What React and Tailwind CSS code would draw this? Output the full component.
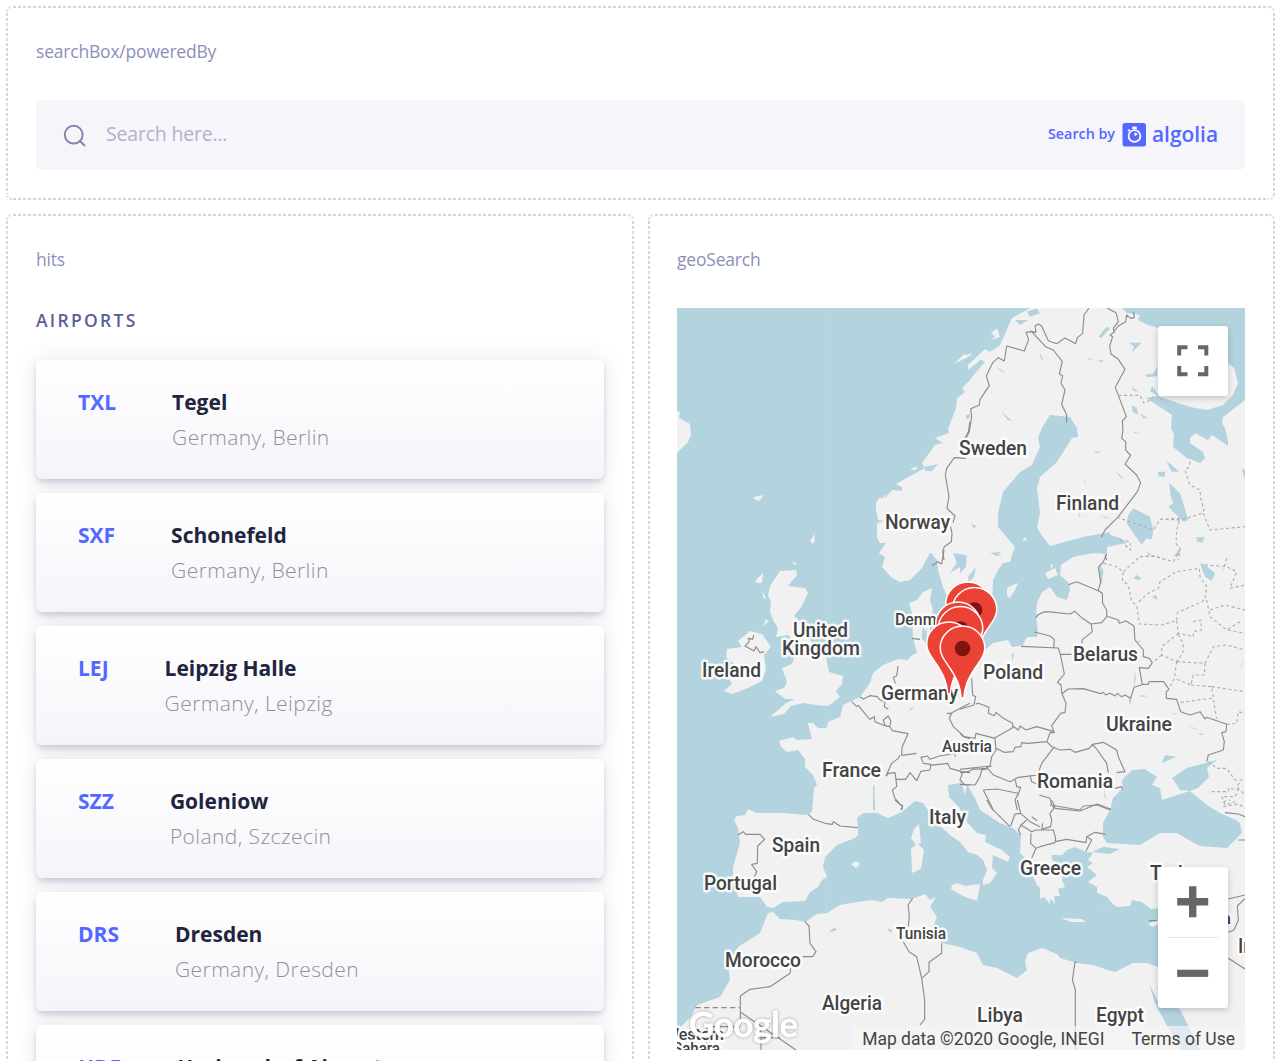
import React from "react";

const hits = [
  ["TXL", "Tegel", "Germany, Berlin"],
  ["SXF", "Schonefeld", "Germany, Berlin"],
  ["LEJ", "Leipzig Halle", "Germany, Leipzig"],
  ["SZZ", "Goleniow", "Poland, Szczecin"],
  ["DRS", "Dresden", "Germany, Dresden"],
  ["HDF", "Heringsdorf Airport", "Germany, Heringsdorf"],
];

// [text, x, baseline, width, font size]
const labels = [
  ["Norway", 885, 528.6, 65, 19.4],
  ["Sweden", 959, 455.4, 68, 19.4],
  ["Finland", 1056, 510.4, 63, 19.4],
  ["United", 793, 637.4, 55, 19.4],
  ["Kingdom", 782, 654.6, 78, 19.4],
  ["Ireland", 702, 676.6, 59, 19.4],
  ["Denmark", 895, 625.4, 64, 17],
  ["Germany", 881, 700, 77, 19.4],
  ["Poland", 983, 679.4, 60, 19.4],
  ["Belarus", 1073, 660.6, 65, 19.4],
  ["Ukraine", 1106, 730.6, 66, 19.4],
  ["Austria", 942, 752.4, 50, 16.5],
  ["France", 822, 776.6, 59, 19.4],
  ["Romania", 1037, 787.6, 76, 19.4],
  ["Italy", 929, 823.6, 37, 19.4],
  ["Spain", 772, 851.6, 48, 19.4],
  ["Portugal", 704, 890.4, 73, 19.4],
  ["Greece", 1020, 874.5, 61, 19.4],
  ["Turkey", 1150, 880, 57, 19.4],
  ["Tunisia", 896, 939.4, 50, 16.5],
  ["Morocco", 725, 967, 76, 19.4],
  ["Algeria", 822, 1010, 60, 19.4],
  ["Libya", 977, 1022.4, 46, 19.4],
  ["Egypt", 1096, 1022.4, 48, 19.4],
  ["Western", 665, 1039.5, 59, 16],
  ["Sahara", 673, 1054, 47, 16],
  ["Iraq", 1238, 953, 32, 19.4],
  ["Syria", 1190, 924, 41, 16.5],
];

const pins = [
  [968, 605],
  [974.5, 610.5],
  [958, 625],
  [960.5, 629.5],
  [949, 645],
  [962.5, 649],
];

const Sector = ({ x, y, children }) => (
  <g transform={`translate(${x} ${y}) scale(0.33333)`}>{children}</g>
);

const Land = () => (
  <g fill="#f1f1f1">
    <path d="M1245 308V400L1245 1050H677V1030L690 1018 697 1005 720 997 730 980 728 963 738 947 760 933 768 913 773 912 780 919 796 920 805 922 817 914 827 913 840 905 857 902 872 900 882 902 888 898 912 899 925 894 930 900 936 897 930 907 937 917 933 927 937 938 942 943 960 947 977 953 983 965 997 968 1017 978 1027 970 1025 962 1028 953 1042 948 1057 954 1060 958 1077 963 1093 965 1108 970 1115 972 1133 963 1147 963 1158 967 1168 955 1175 935 1178 912 1160 908 1151 909 1142 902 1132 900 1130 906 1117 907 1112 903 1107 897 1097 893 1097 887 1088 882 1097 875 1087 867 1093 863 1088 860 1093 853 1087 852 1082 850 1075 847 1067 850 1062 855 1052 855 1052 860 1065 866 1062 880 1065 887 1058 889 1060 896 1054 896 1055 904 1050 898 1050 904 1044 897 1040 899 1040 888 1037 885 1030 870 1025 858 1020 853 1021 836 1013 828 1000 823 980 810 975 798 967 785 965 795 962 783 948 785 949 797 959 807 967 822 977 833 986 835 985 842 1002 850 1010 857 1008 862 993 855 992 868 997 873 990 883 983 885 983 880 987 870 983 860 977 855 968 852 960 842 950 835 937 823 923 803 915 801 902 812 888 818 877 813 863 813 857 818 858 827 858 835 855 838 837 845 825 857 823 867 827 877 822 880 818 887 810 892 805 901 783 902 773 908 767 907 760 897 752 897 738 897 733 877 733 867 740 843 738 828 734 820 737 816 745 815 748 809 757 813 783 813 807 815 812 812 814 788 817 785 813 775 805 767 805 759 798 750 787 752 781 747 779 741 793 737 797 740 812 739 808 723 813 723 818 728 827 728 828 722 840 717 843 705 860 697 870 683 873 673 883 665 898 659 908 660 912 655 917 653 913 638 912 613 909 603 917 600 923 592 932 588 930 600 933 610 929 625 933 640 938 655 960 662 985 650 993 643 1008 640 1012 647 1023 645 1027 637 1037 637 1038 632 1036 617 1037 603 1042 592 1050 587 1057 597 1067 600 1070 590 1069 583 1060 575 1061 565 1073 557 1093 553 1107 554 1107 547 1127 543 1120 538 1110 535 1110 532 1083 537 1050 546 1040 533 1037 527 1040 513 1037 488 1040 477 1057 462 1072 438 1078 437 1077 428 1070 417 1050 415 1042 428 1038 438 1040 447 1032 465 1020 472 1003 492 998 513 998 527 1015 547 1013 552 1010 562 1003 563 998 570 993 580 992 603 986 613 965 620 953 610 943 587 938 570 937 560 930 553 922 568 910 580 900 582 892 578 882 567 885 557 879 553 886 543 880 543 877 538 877 523 884 521 878 520 876 510 876 503 879 498 885 498 892 490 902 491 902 487 896 484 903 480 925 468 922 463 935 445 943 443 935 438 949 433 948 429 956 408 957 398 965 392 962 388 970 380 972 377 985 362 978 358 993 350 1000 345 1012 318 1030 308Z" />
    {/* British Isles */}
    <path d="M780 571L796 570 797 575 788 586 805 588 808 593 802 606 794 616 801 622 816 650 826 658 829 672 843 676 842 684 836 691 840 697 828 706 816 705 803 703 791 706 784 714 770 717 786 703 795 699 785 699 775 691 784 688 787 682 782 668 792 664 795 655 794 641 788 635 776 637 778 628 773 620 770 612 771 602 768 595 770 586Z" />
    <path d="M750 631L762 634 771 647 764 655 766 670 762 681 748 688 732 694 724 691 732 684 726 674 738 667 726 657 727 649 742 647 738 641Z" />
    <path d="M763 573L755 581 757 583 762 583ZM761 590L766 598 764 599ZM793 561L797 564 794 565ZM766 619L763 626 769 621ZM810 541L814 534 815 540 813 544ZM754 499L754 497 764 495 759 501Z" />
    {/* Iceland */}
    <path d="M677 410L680 413 679 418 690 424 691 435 688 442 677 453Z" />
    {/* Lofoten */}
    <path d="M954 364L966 352 976 348 970 356ZM968 365L985 349 990 352 978 362 968 370ZM910 470L917 466 916 470ZM883 497L885 494 885 498ZM980 340L997 328 1000 337 990 340Z" />
    {/* Baltic and Danish islands */}
    <path d="M1007 588L1013 585 1018 583 1015 590 1010 598 1007 596ZM1045 573L1055 568 1058 575 1048 579ZM1050 565L1053 564 1052 569ZM1022 540L1025 537 1027 541ZM934 630L945 628 942 640 935 637Z" />
    {/* Mediterranean islands */}
    <path d="M919 824L921 843 916 845 911 838 914 829ZM911 848L918 844 924 850 921 869 912 873ZM851 864L856 861 860 864 856 868ZM952 885L957 883 965 886 980 884 977 901 965 897 951 889ZM1061 918L1082 919 1086 922 1071 922ZM1148 924L1160 919 1158 924 1153 927ZM1105 906L1104 910 1103 911Z" />
  </g>
);

const Water = () => (
  <g fill="#b3d3df">
    <path d="M1122 308L1127 313 1140 315 1138 320 1148 325 1158 328 1175 340 1212 358 1228 363 1234 368 1238 383 1233 395 1223 405 1207 410 1190 407 1178 403 1160 397 1152 386 1150 391 1158 396 1146 398 1160 407 1172 415 1171 428 1174 435 1173 447 1187 458 1200 463 1205 458 1203 452 1190 443 1190 438 1195 433 1208 440 1212 435 1228 446 1228 441 1225 428 1222 423 1223 417 1245 400V308Z" />
    <path d="M1110 810L1113 798 1123 788 1122 780 1132 770 1145 769 1157 777 1152 785 1160 788 1162 800 1177 795 1190 791 1207 805 1220 813 1236 820 1240 823 1242 833 1227 848 1200 846 1185 838 1177 833 1160 833 1140 845 1107 843 1103 837 1103 823ZM1172 778L1187 768 1217 760 1207 768 1209 777 1198 788 1190 791 1180 790 1177 785Z" />
    <path d="M1092 852L1103 847 1120 849 1110 854ZM1149 984L1158 1001 1180 1009 1200 1050H1182L1166 1024 1155 1003Z" />
    <Sector x={960} y={300}>
      <path d="M0 160L50 120 85 90 105 110 75 130 62 150 20 165ZM70 90L100 70 120 45 160 30 150 60 90 100ZM165 60L205 60 180 75ZM200 35L230 25 240 40 210 50ZM415 110L440 80 450 85 425 113ZM508 128L545 128 515 158 522 140ZM553 225L580 220 592 200V228L565 232ZM108 200L138 218 122 214ZM125 335L155 362 143 360ZM400 455H425L410 460ZM465 510L495 540 480 532ZM372 538L378 555 373 550ZM240 160L252 182 242 175ZM380 175L398 176 390 180ZM412 180L432 182 425 188ZM515 315L530 325 535 345 518 335ZM520 395L545 400 525 400ZM540 340L563 355 550 355ZM594 515H615V530H596ZM620 485L635 495 657 515 635 515ZM505 645L520 625 570 650 580 690 576 718 560 715 545 735 500 670ZM627 548L660 580 685 660 670 665 625 620 640 610 632 590ZM708 712L733 712 728 728 712 725ZM415 645L455 656 440 655ZM35 670L50 680 40 684ZM95 755L125 768 105 767ZM845 503L855 510V540ZM640 770L660 745 658 765ZM355 630L362 650 358 650ZM515 260L535 275 520 272ZM18 350L30 342 22 358Z" />
    </Sector>
    <Sector x={670} y={300}>
      <path d="M765 500L805 492 785 514 765 512ZM888 345L900 342V352L890 356ZM778 760L790 762 785 780ZM857 768L890 770 882 780H865Z" />
    </Sector>
    <Sector x={670} y={550}>
      <path d="M850 10L888 15 880 45 840 68 860 40ZM715 482L732 468 725 480ZM609 705L613 705 615 780 609 780ZM758 220L765 245 772 235 768 280 755 265Z" />
    </Sector>
    <Sector x={960} y={550}>
      <path d="M0 20L20 15 18 50 0 70ZM25 80L48 50 42 80 25 98ZM88 10L125 5 112 15ZM420 45L430 60 425 105 418 75ZM720 38L735 45 765 70 755 92 735 80ZM520 85L530 75 545 85 535 90ZM575 140L590 135 592 150ZM525 362L528 385 522 410ZM505 445L515 448 510 465ZM538 435L565 438 545 441ZM685 525L712 540 700 536ZM710 550L732 552 725 556ZM615 615L648 620 605 640ZM840 355L852 328 845 350ZM155 315L162 305 158 335ZM432 715L438 745 434 745ZM528 275L548 270 535 278ZM485 103L500 93 495 100ZM560 5L575 15 565 15ZM640 490H650L640 495Z" />
    </Sector>
    <Sector x={670} y={800}>
      <path d="M475 398L492 383 502 390ZM652 385L668 390 660 400Z" />
    </Sector>
  </g>
);

const Borders = () => (
  <g fill="none" stroke="#8c8c8c" strokeWidth="3.4" strokeLinejoin="round">
    <Sector x={670} y={300}>
      <path d="M900 365L895 395 885 415M888 475L853 473 830 505 826 525 837 590 831 625 855 648 849 668M842 680L846 700 844 725 823 740 818 755 822 780" />
    </Sector>
    <Sector x={960} y={300}>
      <path d="M18 415L28 395 35 350 32 326 58 315 60 298 88 257 79 228 98 188 115 173 133 183 140 138 193 153 206 118 198 97 218 95 228 97 225 78 235 72 245 78 265 122 290 131 315 114 347 131 352 113 368 100 372 45 387 24M212 92L257 140 280 150 307 185 298 222 308 227 303 250 315 270 305 313 320 345V368M441 24L468 38 475 65 460 85 463 97 450 105 458 110 449 138 453 162 475 178 495 208 466 262 499 350 487 363 489 390 485 415 497 425V450L512 466 495 492 530 525 542 548 532 575 475 650 435 690 424 712M460 97L475 78 497 65 500 45 512 55 523 53 520 35M435 765L440 780" />
    </Sector>
    <Sector x={670} y={550}>
      <path d="M822 0L815 42 803 35 786 47M726 265L750 268M251 255L248 268 235 265 238 275 225 288 252 303 258 290 270 308 282 305M684 348L680 378 670 382 676 400M570 441L580 447 600 437 622 440 630 450 645 455 643 470 655 478M545 455L560 470 565 466 592 500 600 508 613 500 615 515 645 527 640 510 655 498 663 515 658 530 645 527M660 530L667 542 714 551 696 592 695 616 740 610M690 616L685 625 665 640 648 678 656 670 675 668 678 688 707 688 720 668 740 692 753 664 780 660 782 643 760 640 753 622 772 618 780 628 808 618 857 610 855 620M780 646L833 640 840 655 875 665 900 668M678 688L680 710 667 720 675 745 688 760 698 768 695 780M830 490L845 490 838 505 850 530 883 560 900 567M838 492L900 460M878 668L870 690 885 705 900 705" />
    </Sector>
    <Sector x={960} y={550}>
      <path d="M440 12L430 35 415 52 422 95 415 122 350 95 325 104M415 122L427 130 428 160 440 180 440 198 475 210 478 220 498 213 522 228 525 270 550 300 550 320 568 325 577 338 565 355 538 353 547 405M226 204Q240 185 262 185L330 192 345 184 365 203 393 222 425 218 440 200M393 222L397 245 368 268 365 280M223 246L270 258 283 268 281 292M183 289L295 294 301 313 335 313M301 313L313 372 292 397 303 405 306 432 318 460 315 487 302 490 275 527 283 548 270 547 260 578M305 432L325 417 370 416 422 431 430 427 437 435 450 430 465 438 472 430 485 440 495 435 512 445 522 412 550 403 565 403 567 395 611 395 627 418 619 425 619 445 650 448 662 485 690 495 720 485 735 507 740 502 800 523 798 545 785 548 793 575 790 600 745 615 740 635M35 385L38 435 47 440 42 465 0 478M47 462L55 460 87 472 85 490 103 497 108 487 130 505 158 520 158 533 105 563M158 528L175 540 180 528 198 540 230 530 283 545M0 550L10 560 45 565 48 550 105 565 108 600 95 620 90 648 0 658M108 595L132 607 160 605 165 592 183 590 185 578 205 580 260 575 275 590 300 600 330 598 345 607 388 595 397 583 430 577 470 600 475 620 495 665 470 668M397 583L412 600 440 640 445 668M283 590L245 640 235 668M95 648L80 652 100 675 150 695 175 682 235 675M85 655L65 660 60 680 45 705 0 703M0 668L25 665 38 658 80 655M70 720L110 717 175 730 165 750 172 780M70 720L100 780M165 685L170 710 182 712 172 740M210 675L215 695 237 705M238 735L270 745 275 765 283 775M270 765L360 780 370 768 412 765 450 780M465 715L485 710 487 720" />
    </Sector>
    <Sector x={670} y={800}>
      <path d="M415 43L430 58 465 70 487 73 490 65 510 78 563 83M675 0L698 20 692 30M203 105L220 95 227 103 270 103 284 118 263 138 262 190 245 193 260 215 253 230M405 365L417 378 420 430 438 455 428 470 398 470M362 505L360 520 300 560 240 568 211 588V665M211 636L378 750M728 295L714 315 718 345 715 380M700 425L717 455 740 470 755 535 764 600V658L750 675M815 430V460L777 487V515L755 535M210 680H110V750M273 680V750M273 713H330" />
      <path d="M76 623H210" strokeDasharray="16 10" />
    </Sector>
    <Sector x={960} y={800}>
      <path d="M80 0L95 25 150 80M152 78L165 42 182 40 172 0M182 40L210 65 240 80M183 75L175 90 182 105M200 60L183 75 215 95 228 90 280 90 287 115 285 128 240 140 228 145 212 130 213 100M228 145L215 175M215 50L232 62M245 88L248 70M285 125L320 118 378 128 380 110 405 97 437 103M383 112L395 120 378 153M245 88L272 80 275 60 270 40 285 20 275 0M285 25L360 33 412 12 453 28M795 38L835 42 855 50M805 297L855 285M855 295L832 318 835 360 822 390 805 397M805 475L855 507M567 362L592 362M345 487L337 540 346 570V750M350 487H343M835 120H855" />
    </Sector>
    <g strokeDasharray="9 8" stroke="#adadad">
      <Sector x={960} y={300}>
        <path d="M475 286H540L552 310 570 300 580 290M690 485L688 500 675 510 690 555 720 570 722 595 732 630 725 640 665 660 600 658 580 690 475 653M730 640L750 690 855 680M600 658L660 655 650 690 648 730 660 745 655 780M480 720L510 725 512 750 495 735M540 770L580 768 610 775" />
      </Sector>
      <Sector x={960} y={550}>
        <path d="M430 40L465 48 490 65 487 90 505 105 515 155 530 165 538 222 605 225 650 212 652 188 715 160 735 150 740 110 720 80 718 55 650 65 600 95 595 115 565 130 530 160M490 65L540 20 580 18 640 35 660 0M735 45L800 50 830 65 810 115 855 105M740 150L750 200 800 240 855 250M750 180L795 165 855 180M650 212L655 250 700 260 700 245 725 240 722 210 700 215M655 250L605 290 605 315 650 335 668 310 670 280 655 255M605 315L577 338M650 335L643 385 627 418M650 335L735 340 733 375 700 375 693 405 643 385M693 405L755 410 765 480 770 505M755 410L855 425M755 445L655 458M800 523L830 520 835 485 855 490M745 635L770 655 800 655 825 690 845 690 830 710 855 735M755 725L805 725 805 715 835 720 825 740 785 740 795 765 825 755M800 25L790 60M840 215L800 240M735 340L760 290 800 285 855 300" />
      </Sector>
      <Sector x={960} y={800}>
        <path d="M790 5L810 0M790 20L835 12 855 25" />
      </Sector>
    </g>
  </g>
);

const Pin = ({ x, y }) => (
  <g transform={`translate(${x} ${y})`}>
    <path
      d="M-1.3 49C-2 38-5 31-12 20C-18 11-22.3 6-22.3-1A22.3 22 0 0 1 22.3-1C22.3 6 18 11 12 20C5 31 2 38 1.3 49Z"
      fill="#ea4335"
      stroke="#fff"
      strokeWidth="1.5"
    />
    <circle r="7.8" cy="-0.5" fill="#811411" />
  </g>
);

const GeoMap = () => (
  <div className="relative mt-[36px] h-[742px] overflow-hidden bg-[#b3d3df] font-[Roboto,sans-serif]">
    <svg className="block h-[742px] w-[568px]" viewBox="677 308 568 742">
      <Land />
      <Water />
      <Borders />
      <path d="M826.5 308V1050" stroke="#fff" strokeOpacity="0.12" />
      <g
        fill="#444"
        stroke="#fff"
        strokeOpacity="0.85"
        strokeWidth="5"
        strokeLinejoin="round"
        paintOrder="stroke"
        fontWeight="500"
      >
        {labels.map(([t, x, y, w, s]) => (
          <text key={t} x={x} y={y} fontSize={s} textLength={w} lengthAdjust="spacingAndGlyphs">
            {t}
          </text>
        ))}
      </g>
      {pins.map(([x, y]) => (
        <Pin key={x} x={x} y={y} />
      ))}
    </svg>
    <div className="absolute top-[18px] right-[17px] flex size-[70px] items-center justify-center rounded-[3px] bg-white shadow-[0_2px_6px_rgba(0,0,0,0.2)]">
      <svg className="size-[32px]" viewBox="0 0 32 32" fill="none" stroke="#666" strokeWidth="4">
        <path d="M2.2 10.5V2.2H10.5M21 2.2H29.3V10.5M29.3 21V29.3H21M10.5 29.3H2.2V21" />
      </svg>
    </div>
    <div className="absolute right-[17px] bottom-[42px] flex h-[141px] w-[70px] flex-col items-center rounded-[3px] bg-white shadow-[0_2px_6px_rgba(0,0,0,0.2)]">
      <svg className="h-[70px] w-[32px]" viewBox="0 0 32 70" stroke="#666" strokeWidth="7.4">
        <path d="M0.2 34.8H31.2M15.7 19.3V50.3" />
      </svg>
      <div className="h-px w-[52px] bg-[#e6e6e6]" />
      <svg className="h-[70px] w-[32px]" viewBox="0 0 32 70" stroke="#666" strokeWidth="7.2">
        <path d="M0.2 35.3H31.2" />
      </svg>
    </div>
    <svg
      className="absolute bottom-0 left-[8px] h-[46px] w-[120px] overflow-visible drop-shadow-[0_0_1.5px_rgba(0,0,0,0.35)]"
      viewBox="685 1004 120 46"
    >
      <text
        x="689"
        y="1036.5"
        fontFamily="Lato, sans-serif"
        fontWeight="600"
        fontSize="34"
        textLength="109"
        lengthAdjust="spacingAndGlyphs"
        fill="#fff"
        stroke="#fff"
        strokeWidth="0.8"
      >
        Google
      </text>
    </svg>
    <div className="absolute right-0 bottom-0 flex h-[24px] w-[392px] items-center justify-end gap-[27px] bg-[#f5f5f5]/70 pt-[2px] pr-[10px] text-[17.5px] whitespace-nowrap text-[#444]">
      <span>Map data ©2020 Google, INEGI</span>
      <span>Terms of Use</span>
    </div>
  </div>
);

// Width and height are those of the panel, so the dashes fall on whole pixels.
const DashedOutline = ({ width, height }) => (
  <svg
    className="pointer-events-none absolute inset-0"
    width={width}
    height={height}
    fill="none"
    stroke="#d3d3e9"
    strokeWidth="2"
  >
    <path
      d={`M7 1H${width - 6}M7 ${height - 1}H${width - 6}M1 7V${height - 6}M${width - 1} 7V${height - 6}`}
      strokeDasharray="3 2"
    />
    <path
      d={`M1 6Q1 1 6 1M${width - 6} 1Q${width - 1} 1 ${width - 1} 6M${width - 1} ${height - 6}Q${width - 1} ${height - 1} ${width - 6} ${height - 1}M6 ${height - 1}Q1 ${height - 1} 1 ${height - 6}`}
      strokeDasharray="2.5 1.5"
      strokeOpacity="0.75"
    />
  </svg>
);

const Panel = ({ title, width, height, className, children }) => (
  <section className={`relative pt-[30px] ${className}`}>
    <DashedOutline width={width} height={height} />
    <h2 className="h-[28px] text-[17.5px] leading-[31px] font-normal tracking-[-0.2px] text-[#8c8fbc]">
      {title}
    </h2>
    {children}
  </section>
);

export default function App() {
  return (
    <main className="h-[1061px] w-[1285px] overflow-hidden bg-white pt-[6px] pl-[6px] font-['Open_Sans',sans-serif]">
      <div className="grid w-[1269px] grid-cols-[628px_627px] gap-[14px]">
        <Panel
          title="searchBox/poweredBy"
          width={1269}
          height={194}
          className="col-span-2 h-[194px] px-[30px]"
        >
          <div className="mt-[36px] flex h-[70px] items-center rounded-[6px] bg-[#f5f5fa] pr-[27px] pl-[27px]">
            <svg
              className="mt-[1px] size-[24px]"
              viewBox="0 0 24 24"
              fill="none"
              stroke="#8487ab"
              strokeWidth="2"
            >
              <circle cx="10.7" cy="10.7" r="8.9" />
              <path d="M17 17L22 22" />
            </svg>
            <span className="ml-[19px] flex-1 pb-[2px] text-[19.5px] tracking-[-0.2px] text-[#b0b2cf]">
              Search here...
            </span>
            <svg className="h-[34px] w-[170px] overflow-visible" viewBox="1048 117 170 34">
              <g fill="#5468ff" fontFamily="Open Sans, sans-serif" fontWeight="600">
                <text x="1048" y="138" fontSize="14" textLength="67" lengthAdjust="spacingAndGlyphs">
                  Search by
                </text>
                <rect x="1122.5" y="122" width="23.5" height="23.5" rx="2.5" />
                <text
                  x="1152"
                  y="140.5"
                  fontSize="22"
                  textLength="66"
                  lengthAdjust="spacingAndGlyphs"
                >
                  algolia
                </text>
              </g>
              <g fill="none" stroke="#fff">
                <circle cx="1134.5" cy="135" r="5.9" strokeWidth="1.8" />
                <path d="M1132.2 126.8H1136.8" strokeWidth="2.4" />
                <path d="M1128.2 130.2L1129.8 128.6" strokeWidth="1.8" />
              </g>
              <path d="M1134.5 131.5V135.3L1137.8 133.3A4 4 0 0 0 1134.5 131.5Z" fill="#fff" />
            </svg>
          </div>
        </Panel>

        <Panel title="hits" width={628} height={900} className="h-[900px] px-[30px]">
          <h3 className="mt-[32px] h-[56px] text-[17.5px] leading-[33px] font-semibold tracking-[2.3px] text-[#5a5e9a]">
            AIRPORTS
          </h3>
          <div className="flex flex-col gap-[14px]">
            {hits.map(([code, name, place]) => (
              <article
                key={code}
                className="flex h-[119px] gap-[56px] rounded-[6px] bg-linear-to-b from-white to-[#f5f5fa] px-[42px] pt-[25px] text-[21px] leading-[35px] whitespace-nowrap shadow-[0_0_24px_rgba(35,38,59,0.1),0_4px_6px_-1px_rgba(119,122,175,0.35)]"
              >
                <span className="font-bold text-[#5468ff]">{code}</span>
                <div>
                  <div className="font-bold text-[#21243d]">{name}</div>
                  <div className="font-light tracking-[0.42px] text-[#8e90a0]">{place}</div>
                </div>
              </article>
            ))}
          </div>
        </Panel>

        <Panel title="geoSearch" width={627} height={900} className="h-[900px] pr-[30px] pl-[29px]">
          <GeoMap />
        </Panel>
      </div>
    </main>
  );
}
